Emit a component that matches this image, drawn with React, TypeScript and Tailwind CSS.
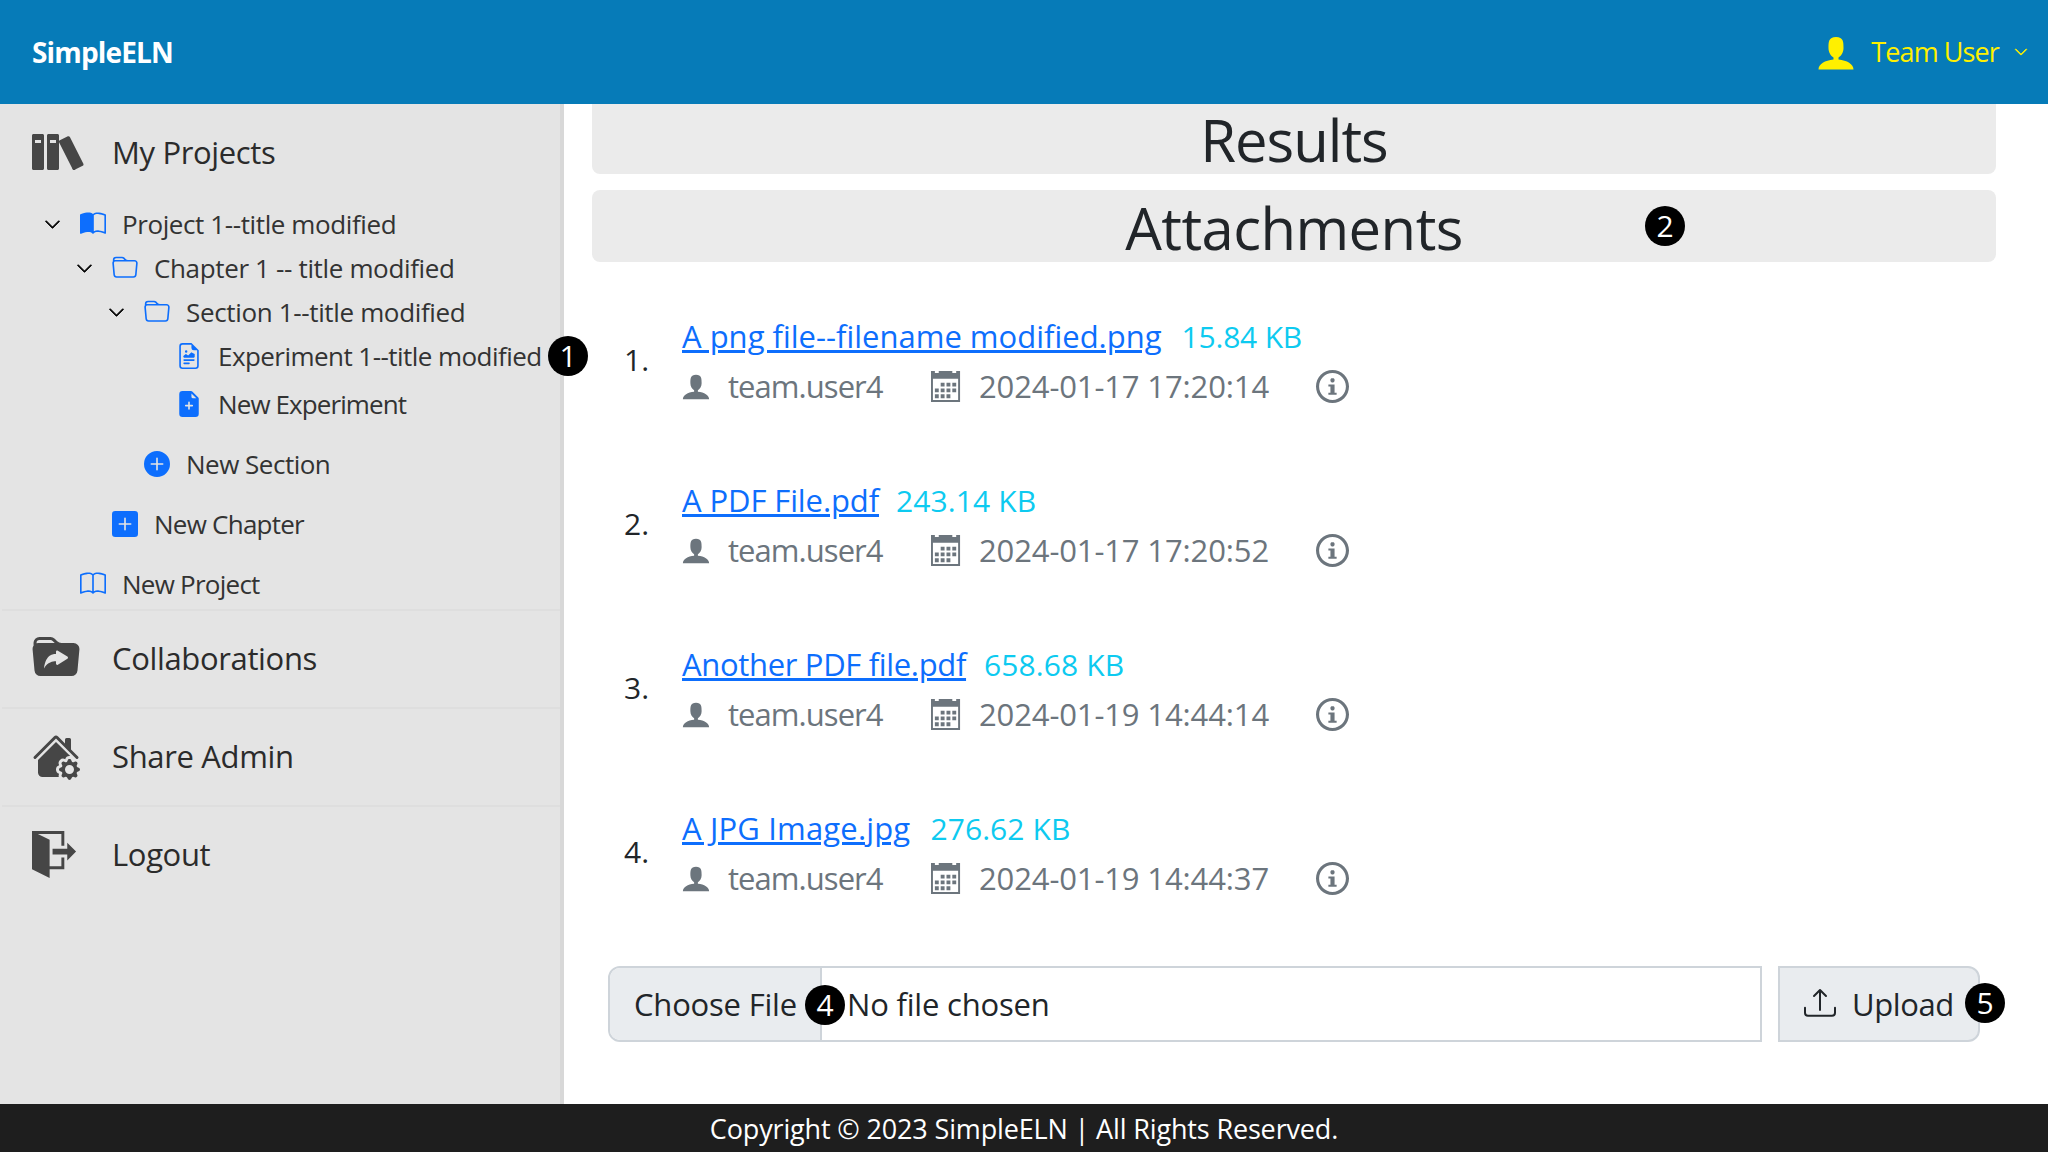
import React from "react";
import {
  BsBook,
  BsBookHalf,
  BsChevronDown,
  BsFileEarmarkPlusFill,
  BsFileEarmarkRichtext,
  BsFolder,
  BsFolderSymlinkFill,
  BsHouseGearFill,
  BsPlusCircleFill,
  BsPlusSquareFill,
  BsUpload,
} from "react-icons/bs";
import { ImBooks, ImCalendar, ImExit, ImInfo, ImUser } from "react-icons/im";

const attachments = [
  {
    name: "A png file--filename modified.png",
    size: "15.84 KB",
    date: "2024-01-17 17:20:14",
    nameClass: "tracking-[0px]",
    sizeClass: "ml-[20px] tracking-[-0.2px]",
  },
  {
    name: "A PDF File.pdf",
    size: "243.14 KB",
    date: "2024-01-17 17:20:52",
    nameClass: "tracking-[-0.1px]",
    sizeClass: "ml-[17px] tracking-[0.1px]",
  },
  {
    name: "Another PDF file.pdf",
    size: "658.68 KB",
    date: "2024-01-19 14:44:14",
    nameClass: "tracking-[-0.33px]",
    sizeClass: "ml-[18px] tracking-[0.1px]",
  },
  {
    name: "A JPG Image.jpg",
    size: "276.62 KB",
    date: "2024-01-19 14:44:37",
    nameClass: "tracking-[0.17px]",
    sizeClass: "ml-[20px] tracking-[0.1px]",
  },
];

function Badge({ n, className }: { n: number; className: string }) {
  return (
    <span
      className={
        "absolute z-10 flex h-10 w-10 items-center justify-center rounded-full bg-black text-[30px] font-medium leading-none text-white " +
        className
      }
    >
      {n}
    </span>
  );
}

function NavItem({ icon, label }: { icon: React.ReactNode; label: string }) {
  return (
    <div className="flex h-[98px] items-center border-t-2 border-[#dedede] pb-[2px] pl-[30px] text-[31px] tracking-[-0.35px] text-[#2b2b2b]">
      <span className="flex w-[80px] items-center text-[#464646]">{icon}</span>
      {label}
    </div>
  );
}

function TreeRow({
  chevron,
  icon,
  label,
  className,
}: {
  chevron?: boolean;
  icon: React.ReactNode;
  label: string;
  className: string;
}) {
  return (
    <div className={"relative flex items-center pb-[2px] text-[26px] text-[#333] " + className}>
      {chevron && <BsChevronDown className="absolute ml-[-36px] text-[17px] text-black" strokeWidth={0.8} />}
      <span className="flex w-[42px] items-center text-[#0d6efd]">{icon}</span>
      {label}
    </div>
  );
}

function Sidebar() {
  return (
    <aside className="relative w-[564px] shrink-0 border-r-4 border-[#d8d8d8] bg-[#e4e4e4] pl-[2px]">
      <div className="flex h-[94px] items-center pl-[30px] pt-[2px] text-[31px] tracking-[-0.35px] text-[#2b2b2b]">
        <span className="flex w-[80px] items-center text-[#464646]">
          <ImBooks size={54} />
        </span>
        My Projects
      </div>
      <div className="pb-[2px] pt-[5px]">
        <TreeRow chevron className="h-11 pl-[78px] tracking-[-0.4px]" icon={<BsBookHalf size={26} />} label="Project 1--title modified" />
        <TreeRow chevron className="h-11 pl-[110px] tracking-[-0.35px]" icon={<BsFolder size={26} />} label="Chapter 1 -- title modified" />
        <TreeRow chevron className="h-11 pl-[142px] tracking-[-0.35px]" icon={<BsFolder size={26} />} label="Section 1--title modified" />
        <TreeRow className="h-11 pl-[174px] tracking-[-0.55px]" icon={<BsFileEarmarkRichtext size={26} />} label="Experiment 1--title modified" />
        <TreeRow className="mt-[4px] h-11 pl-[174px] tracking-[-0.9px]" icon={<BsFileEarmarkPlusFill size={26} />} label="New Experiment" />
        <TreeRow className="mt-4 h-11 pl-[142px] tracking-[-0.5px]" icon={<BsPlusCircleFill size={26} />} label="New Section" />
        <TreeRow className="mt-4 h-11 pl-[110px] tracking-[-0.75px]" icon={<BsPlusSquareFill size={26} />} label="New Chapter" />
        <TreeRow className="mt-4 h-11 pl-[78px] tracking-[-0.75px]" icon={<BsBook size={26} />} label="New Project" />
      </div>
      <NavItem icon={<BsFolderSymlinkFill size={48} />} label="Collaborations" />
      <NavItem icon={<BsHouseGearFill size={48} />} label="Share Admin" />
      <NavItem icon={<ImExit size={47} />} label="Logout" />
      <Badge n={1} className="left-[548px] top-[232px]" />
    </aside>
  );
}

function AttachmentRow({ index, item }: { index: number; item: (typeof attachments)[number] }) {
  return (
    <li className="mb-[64px] flex h-[100px] items-center">
      <span className="w-[58px] pb-[3px] text-[30px] text-[#212529]">{index}.</span>
      <div>
        <div className="flex h-[50px] items-center">
          <a href="#" className={"text-[31px] text-[#0d6efd] underline " + item.nameClass}>
            {item.name}
          </a>
          <span className={"text-[30px] text-[#0dcaf0] " + item.sizeClass}>{item.size}</span>
        </div>
        <div className="flex h-[50px] items-center text-[31px] text-[#6c757d]">
          <ImUser size={30} className="-ml-[1px]" />
          <span className="ml-[17px] w-[203px] tracking-[-0.95px]">team.user4</span>
          <ImCalendar size={31} />
          <span className="ml-[17px] w-[337px] tracking-[-0.13px]">{item.date}</span>
          <ImInfo size={33} />
        </div>
      </div>
    </li>
  );
}

export default function App() {
  return (
    <div className="flex h-screen w-full flex-col overflow-hidden bg-white font-['Open_Sans',sans-serif]">
      <header className="flex h-[104px] shrink-0 items-center justify-between bg-[#067bb8] pl-8 pr-[20px]">
        <span className="text-[28px] font-bold tracking-[-0.85px] text-white">SimpleELN</span>
        <div className="flex items-center text-[27px] tracking-[-0.9px] text-[#fff000]">
          <ImUser size={40} />
          <span className="ml-[15px]">Team User</span>
          <BsChevronDown size={14} className="ml-[15px]" strokeWidth={0.8} />
        </div>
      </header>

      <div className="flex min-h-0 flex-1">
        <Sidebar />
        <main className="relative flex-1 pl-[28px] pr-[52px]">
          <div className="flex h-[70px] items-center justify-center rounded-b-lg bg-[#ebebeb] text-[58px] tracking-[-1px] text-[#212529]">
            Results
          </div>
          <div className="mt-4 flex h-[72px] items-center justify-center rounded-lg bg-[#ebebeb] pt-[2px] text-[58px] tracking-[-0.55px] text-[#212529]">
            Attachments
          </div>
          <Badge n={2} className="left-[1081px] top-[102px]" />

          <ol className="pl-[32px] pt-[49px]">
            {attachments.map((item, i) => (
              <AttachmentRow key={item.name} index={i + 1} item={item} />
            ))}
          </ol>

          <div className="ml-[16px] mt-[-1px] flex h-[76px] items-stretch text-[31px] tracking-[-0.2px] text-[#212529]">
            <div className="flex w-[1154px] overflow-hidden rounded-l-xl border-2 border-[#ced4da]">
              <span className="flex w-[212px] items-center border-r-2 border-[#ced4da] bg-[#e9ecef] pl-[24px]">
                Choose File
              </span>
              <span className="flex items-center pl-[25px]">No file chosen</span>
            </div>
            <button className="ml-4 flex w-[202px] items-center rounded-r-xl border-2 border-[#ced4da] bg-[#e9ecef] pl-[24px]">
              <BsUpload size={32} className="mb-[2px]" />
              <span className="ml-[16px] tracking-[-0.4px]">Upload</span>
            </button>
          </div>
          <Badge n={4} className="left-[241px] top-[881px]" />
          <Badge n={5} className="left-[1401px] top-[879px]" />
        </main>
      </div>

      <footer className="flex h-12 shrink-0 items-center justify-center bg-[#1e1e1e] pt-[2px] text-[27px] tracking-[-0.15px] text-white">
        Copyright © 2023 SimpleELN | All Rights Reserved.
      </footer>
    </div>
  );
}
